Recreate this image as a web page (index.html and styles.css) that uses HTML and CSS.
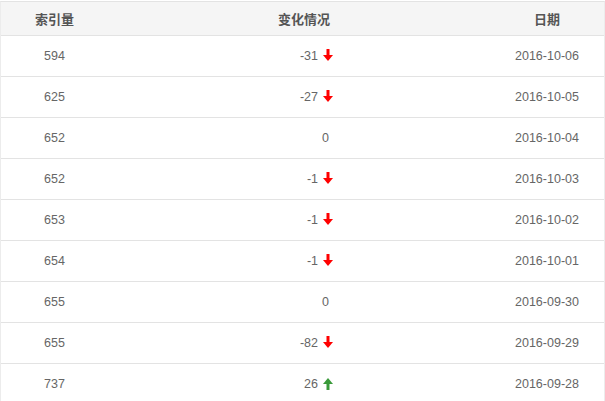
FILE: index.html
```html
<!DOCTYPE html>
<html>
<head>
<meta charset="utf-8">
<link rel="stylesheet" href="styles.css">
</head>
<body>
<div class="table">
  <div class="row head">
    <div class="c1">索引量</div>
    <div class="c2">变化情况</div>
    <div class="c3"></div>
    <div class="c4">日期</div>
  </div>
  <div class="row"><div class="c1">594</div><div class="c2">-31<svg class="arr down" viewBox="0 0 10 13"><rect x="3.5" y="0" width="3" height="7"/><polygon points="0,6 10,6 5,12"/></svg></div><div class="c3"></div><div class="c4">2016-10-06</div></div>
  <div class="row"><div class="c1">625</div><div class="c2">-27<svg class="arr down" viewBox="0 0 10 13"><rect x="3.5" y="0" width="3" height="7"/><polygon points="0,6 10,6 5,12"/></svg></div><div class="c3"></div><div class="c4">2016-10-05</div></div>
  <div class="row"><div class="c1">652</div><div class="c2"><span class="zero">0</span></div><div class="c3"></div><div class="c4">2016-10-04</div></div>
  <div class="row"><div class="c1">652</div><div class="c2">-1<svg class="arr down" viewBox="0 0 10 13"><rect x="3.5" y="0" width="3" height="7"/><polygon points="0,6 10,6 5,12"/></svg></div><div class="c3"></div><div class="c4">2016-10-03</div></div>
  <div class="row"><div class="c1">653</div><div class="c2">-1<svg class="arr down" viewBox="0 0 10 13"><rect x="3.5" y="0" width="3" height="7"/><polygon points="0,6 10,6 5,12"/></svg></div><div class="c3"></div><div class="c4">2016-10-02</div></div>
  <div class="row"><div class="c1">654</div><div class="c2">-1<svg class="arr down" viewBox="0 0 10 13"><rect x="3.5" y="0" width="3" height="7"/><polygon points="0,6 10,6 5,12"/></svg></div><div class="c3"></div><div class="c4">2016-10-01</div></div>
  <div class="row"><div class="c1">655</div><div class="c2"><span class="zero">0</span></div><div class="c3"></div><div class="c4">2016-09-30</div></div>
  <div class="row"><div class="c1">655</div><div class="c2">-82<svg class="arr down" viewBox="0 0 10 13"><rect x="3.5" y="0" width="3" height="7"/><polygon points="0,6 10,6 5,12"/></svg></div><div class="c3"></div><div class="c4">2016-09-29</div></div>
  <div class="row"><div class="c1">737</div><div class="c2">26<svg class="arr up" viewBox="0 0 10 13"><rect x="3.5" y="6" width="3" height="7"/><polygon points="0,7 10,7 5,1"/></svg></div><div class="c3"></div><div class="c4">2016-09-28</div></div>
</div>
</body>
</html>
```
FILE: styles.css
```css
html, body {
  margin: 0;
  padding: 0;
  background: #fff;
}
body {
  font-family: "Liberation Sans", Arial, "Noto Sans CJK SC", sans-serif;
  font-size: 12.5px;
  color: #666;
}
.table {
  margin-top: 1px;
  width: 605px;
  box-sizing: border-box;
  border-top: 1px solid #e3e3e3;
  border-left: 1px solid #ececec;
  border-right: 1px solid #ececec;
}
.row {
  display: grid;
  grid-template-columns: 107px 224px 1fr 114px;
  align-items: center;
  height: 41px;
  box-sizing: border-box;
  border-bottom: 1px solid #e3e3e3;
}
.row.head {
  height: 34px;
  background: #f5f5f5;
  font-family: "Noto Sans CJK SC", sans-serif;
  font-weight: bold;
  font-size: 13px;
  color: #555;
}
.c1, .c4 {
  text-align: center;
}
.c2 {
  text-align: right;
  display: flex;
  justify-content: flex-end;
  align-items: center;
}
.head .c2 {
  padding-right: 2px;
}
.zero {
  margin-right: 3px;
}
.arr {
  width: 10px;
  height: 13px;
  margin-left: 5px;
  margin-right: -1px;
  margin-top: -1px;
  display: block;
}
.arr.down { fill: #f00; }
.arr.up { fill: #3a9a3a; }
```
